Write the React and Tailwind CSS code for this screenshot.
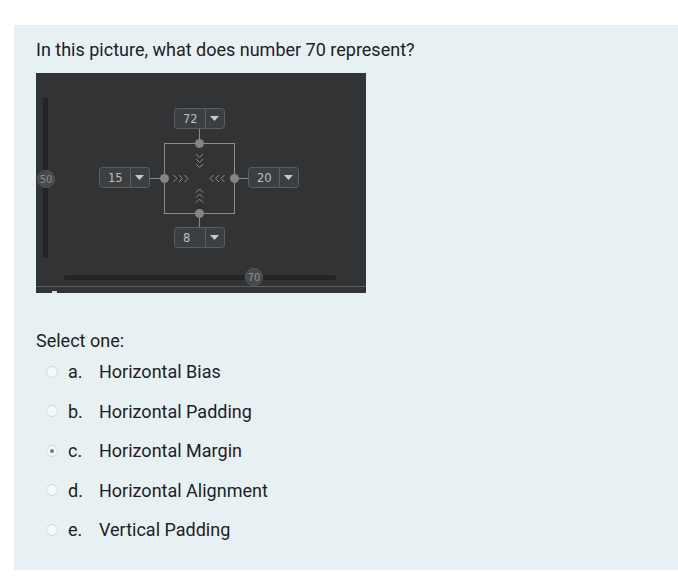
import React from "react";

const OPTIONS = [
  { key: "a", label: "Horizontal Bias" },
  { key: "b", label: "Horizontal Padding" },
  { key: "c", label: "Horizontal Margin", checked: true },
  { key: "d", label: "Horizontal Alignment" },
  { key: "e", label: "Vertical Padding" },
];

// dropdown box of the constraint widget
function Drop({ x, y, value }) {
  return (
    <g>
      <rect x={x + 0.5} y={y + 0.5} width={50} height={20} rx={3} fill="#3c3f41" stroke="#5b5e61" />
      <line x1={x + 31.5} y1={y + 1} x2={x + 31.5} y2={y + 20} stroke="#5b5e61" />
      <text x={x + 9} y={y + 15} fontSize="11.5" fill="#bdbdbd" fontFamily="'DejaVu Sans', sans-serif">
        {value}
      </text>
      <polygon points={`${x + 36},${y + 8} ${x + 45},${y + 8} ${x + 40.5},${y + 13}`} fill="#c9c9c9" />
    </g>
  );
}

function Chevrons({ dir, x, y }) {
  const c = "#8d8d8d";
  const items = [0, 1, 2];
  return (
    <g fill="none" stroke={c} strokeWidth="1">
      {items.map((i) => {
        if (dir === "right") {
          const ox = x + i * 5.5;
          return <polyline key={i} points={`${ox},${y - 3.5} ${ox + 3.5},${y} ${ox},${y + 3.5}`} />;
        }
        if (dir === "left") {
          const ox = x + i * 5.5;
          return <polyline key={i} points={`${ox + 3.5},${y - 3.5} ${ox},${y} ${ox + 3.5},${y + 3.5}`} />;
        }
        if (dir === "down") {
          const oy = y + i * 5;
          return <polyline key={i} points={`${x - 3.5},${oy} ${x},${oy + 3.5} ${x + 3.5},${oy}`} />;
        }
        const oy = y + i * 5;
        return <polyline key={i} points={`${x - 3.5},${oy + 3.5} ${x},${oy} ${x + 3.5},${oy + 3.5}`} />;
      })}
    </g>
  );
}

function ConstraintShot() {
  const line = "#8b8b8b";
  return (
    <svg width="330" height="220" viewBox="0 0 330 220" className="block">
      <rect width="330" height="220" fill="#323335" />
      {/* sliders */}
      <rect x="7" y="25" width="5" height="160" fill="#232425" />
      <rect x="28" y="202" width="272" height="5" rx="2" fill="#232425" />
      <circle cx="10" cy="106" r="8.5" fill="#46484a" stroke="#55585b" />
      <text x="10" y="110" textAnchor="middle" fontSize="10" fill="#8e9092" fontFamily="'DejaVu Sans', sans-serif">50</text>
      <circle cx="218" cy="204" r="8.5" fill="#46484a" stroke="#55585b" />
      <text x="218" y="208" textAnchor="middle" fontSize="10" fill="#8e9092" fontFamily="'DejaVu Sans', sans-serif">70</text>
      <line x1="0" y1="213.5" x2="330" y2="213.5" stroke="#5c5e60" />
      <rect x="16" y="218" width="5" height="2" fill="#d8dadc" />

      {/* box */}
      <rect x="128.5" y="70.5" width="70" height="70" fill="none" stroke={line} />
      <line x1="163.5" y1="55" x2="163.5" y2="70" stroke={line} />
      <line x1="163.5" y1="140" x2="163.5" y2="154" stroke={line} />
      <line x1="113" y1="105.5" x2="128" y2="105.5" stroke={line} />
      <line x1="198" y1="105.5" x2="212" y2="105.5" stroke={line} />
      <circle cx="163.5" cy="70.5" r="4.5" fill="#848484" />
      <circle cx="163.5" cy="140.5" r="4.5" fill="#848484" />
      <circle cx="128.5" cy="105.5" r="4.5" fill="#848484" />
      <circle cx="198.5" cy="105.5" r="4.5" fill="#848484" />
      <Chevrons dir="right" x={137.5} y={105.5} />
      <Chevrons dir="left" x={174} y={105.5} />
      <Chevrons dir="down" x={163.5} y={81} />
      <Chevrons dir="up" x={163.5} y={116} />

      <Drop x={138} y={35} value="72" />
      <Drop x={63} y={94} value="15" />
      <Drop x={212} y={94} value="20" />
      <Drop x={138} y={154} value="8" />
    </svg>
  );
}

export default function App() {
  return (
    <div className="w-[678px] h-[582px] bg-white pt-[25px] pl-[14px] font-['Roboto',sans-serif] text-[#1d2125]">
      <div className="w-[664px] h-[545px] bg-[#e7f0f3] pl-[22px] pt-[11px]">
        <p className="text-[18px] leading-[27px]">In this picture, what does number 70 represent?</p>
        <div className="mt-[10px]">
          <ConstraintShot />
        </div>
        <p className="mt-[34px] text-[18px] leading-[27px]">Select one:</p>
        <div className="-mt-[2px] flex flex-col">
          {OPTIONS.map((o) => (
            <label key={o.key} className="flex items-center h-[39.5px] text-[18px]">
              <span className="ml-[10px] w-[12px] h-[12px] rounded-full border border-[#d3d8db] bg-[#f7f8f9] flex items-center justify-center">
                {o.checked && <span className="w-[4px] h-[4px] rounded-full bg-[#7a7d80]" />}
              </span>
              <span className="ml-[10px] w-[31px]">{o.key}.</span>
              <span>{o.label}</span>
            </label>
          ))}
        </div>
      </div>
    </div>
  );
}
